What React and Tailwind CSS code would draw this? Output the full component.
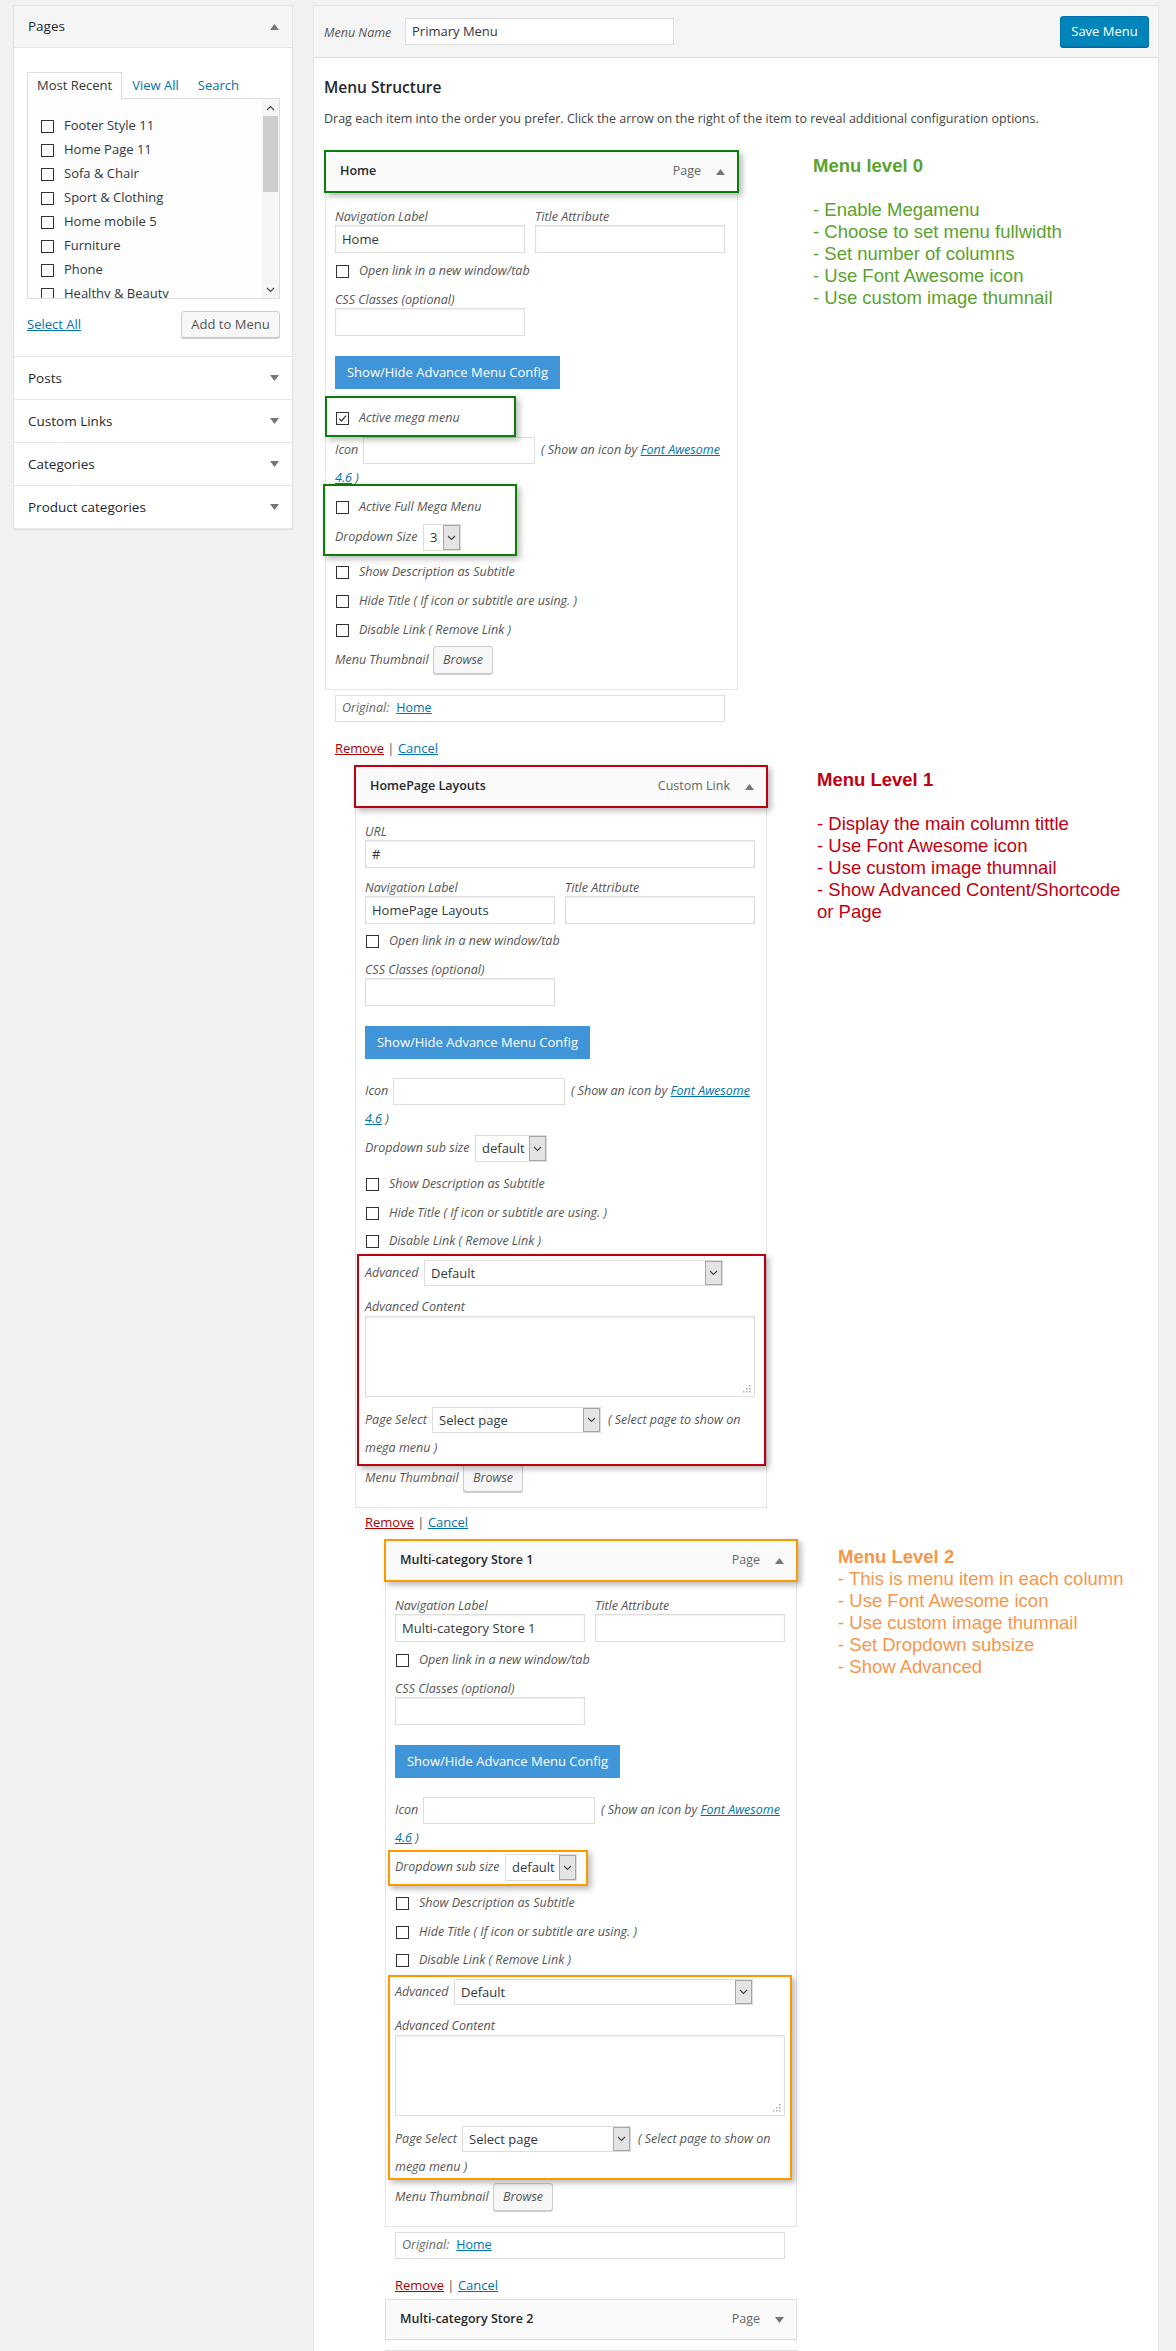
import React from "react";

function Tri({ up = true }) {
  return (
    <svg width="9" height="6" viewBox="0 0 9 6" className="shrink-0">
      <polygon points={up ? "0,6 4.5,0 9,6" : "0,0 4.5,6 9,0"} fill="#72777c" />
    </svg>
  );
}

function Chev({ up = false }) {
  return (
    <svg width="9" height="6" viewBox="0 0 9 6">
      <polyline
        points={up ? "1,5 4.5,1.5 8,5" : "1,1 4.5,4.5 8,1"}
        fill="none"
        stroke="#444"
        strokeWidth="1.1"
      />
    </svg>
  );
}

function Checkbox({ checked }) {
  return (
    <span className="inline-flex h-[13px] w-[13px] shrink-0 items-center justify-center border border-[#333] bg-white">
      {checked && (
        <svg width="9" height="9" viewBox="0 0 9 9">
          <path d="M1 4.6 L3.4 7 L8 1.6" fill="none" stroke="#333" strokeWidth="1.2" />
        </svg>
      )}
    </span>
  );
}

function CheckRow({ label, checked }) {
  return (
    <div className="flex h-[20px] items-center">
      <span className="ml-[1px] flex">
        <Checkbox checked={checked} />
      </span>
      <span className="ml-[10px] italic text-[#555]">{label}</span>
    </div>
  );
}

function Label({ children }) {
  return <div className="h-[16px] leading-[16px] italic text-[#555]">{children}</div>;
}

function Field({ value }) {
  return (
    <div className="h-[28px] w-[190px] border border-[#ddd] bg-white pl-[6px] text-[13px] leading-[26px] text-[#32373c] shadow-[inset_0_1px_2px_rgba(0,0,0,0.07)]">
      {value}
    </div>
  );
}

function SelectBox({ value, className }) {
  return (
    <div className={"flex h-[26px] shrink-0 items-stretch border border-[#ddd] bg-white " + className}>
      <span className="flex-1 pl-[6px] text-[13px] not-italic leading-[24px] text-[#32373c]">{value}</span>
      <span className="flex w-[17px] items-center justify-center border border-[#a6a6a6] bg-[#e4e4e4]">
        <Chev />
      </span>
    </div>
  );
}

function Hl({ className }) {
  return (
    <div
      className={
        "pointer-events-none absolute border-2 shadow-[3px_3px_6px_rgba(0,0,0,0.28)] " + className
      }
    />
  );
}

function ItemHeader({ title, type, up = true, children }) {
  return (
    <div className="relative flex h-[41px] items-center border border-[#dfdfdf] bg-[#fafafa] pl-[14px] pr-[12px] shadow-[0_1px_1px_rgba(0,0,0,0.04)]">
      <span className="text-[12.5px] font-semibold text-[#23282d]">{title}</span>
      <span className="ml-auto text-[12.5px] text-[#666]">{type}</span>
      <span className="ml-[15px] flex">
        <Tri up={up} />
      </span>
      {children}
    </div>
  );
}

function ConfigButton() {
  return (
    <div className="mt-[20px] flex h-[33px] w-[225px] items-center justify-center bg-[#3f95d8] text-[13px] text-white">
      Show/Hide Advance Menu Config
    </div>
  );
}

function IconPara({ className }) {
  return (
    <div className={"italic text-[#555] " + className}>
      <div className="flex h-[27px] items-center">
        <span className="w-[28px] shrink-0">Icon</span>
        <span className="h-[27px] w-[172px] shrink-0 border border-[#ddd] bg-white" />
        <span className="ml-[6px] whitespace-nowrap">( Show an icon by&nbsp;</span>
        <a className="whitespace-nowrap text-[#0073aa] underline">Font Awesome</a>
      </div>
      <div className="h-[27px] leading-[27px]">
        <a className="text-[#0073aa] underline">4.6</a>
        <span> )</span>
      </div>
    </div>
  );
}

function NavTitle({ value }) {
  return (
    <div className="flex gap-[10px]">
      <div>
        <Label>Navigation Label</Label>
        <Field value={value} />
      </div>
      <div>
        <Label>Title Attribute</Label>
        <Field />
      </div>
    </div>
  );
}

function CssField() {
  return (
    <div className="mt-[11px]">
      <Label>CSS Classes (optional)</Label>
      <Field />
    </div>
  );
}

function ThumbRow({ className }) {
  return (
    <div className={"flex h-[28px] items-center " + className}>
      <span className="w-[98px] shrink-0 italic text-[#555]">Menu Thumbnail</span>
      <span className="flex h-[28px] w-[60px] items-center justify-center rounded-[3px] border border-[#ccc] bg-[#f7f7f7] italic text-[#555] shadow-[0_1px_0_#ccc]">
        Browse
      </span>
    </div>
  );
}

function SubSizeRow({ className, children }) {
  return (
    <div className={"relative flex h-[27px] items-center " + className}>
      <span className="w-[110px] shrink-0 italic text-[#555]">Dropdown sub size</span>
      <SelectBox value="default" className="h-[27px] w-[72px]" />
      {children}
    </div>
  );
}

function ResizeDots() {
  return (
    <svg width="9" height="9" viewBox="0 0 9 9" className="absolute bottom-[3px] right-[3px]">
      <g fill="#aaa">
        <rect x="7" y="1" width="1.5" height="1.5" />
        <rect x="4" y="4" width="1.5" height="1.5" />
        <rect x="7" y="4" width="1.5" height="1.5" />
        <rect x="1" y="7" width="1.5" height="1.5" />
        <rect x="4" y="7" width="1.5" height="1.5" />
        <rect x="7" y="7" width="1.5" height="1.5" />
      </g>
    </svg>
  );
}

function AdvancedGroup({ hl }) {
  return (
    <div className="relative mt-[9px]">
      <div className="flex h-[26px] items-center">
        <span className="w-[59px] shrink-0 italic text-[#555]">Advanced</span>
        <SelectBox value="Default" className="w-[299px]" />
      </div>
      <div className="mt-[13px]">
        <Label>Advanced Content</Label>
      </div>
      <div className="relative mt-[1px] h-[81px] w-[390px] border border-[#ddd] bg-white shadow-[inset_0_1px_2px_rgba(0,0,0,0.07)]">
        <ResizeDots />
      </div>
      <div className="mt-[9px] italic text-[#555]">
        <div className="flex h-[28px] items-center">
          <span className="w-[67px] shrink-0">Page Select</span>
          <SelectBox value="Select page" className="w-[169px]" />
          <span className="ml-[7px] whitespace-nowrap">( Select page to show on</span>
        </div>
        <div className="h-[28px] leading-[28px]">mega menu )</div>
      </div>
      {hl}
    </div>
  );
}

function RemoveCancel({ className }) {
  return (
    <div className={"ml-[10px] h-[16px] text-[13px] leading-[16px] " + className}>
      <a className="text-[#a00] underline">Remove</a>
      <span className="text-[#555]"> | </span>
      <a className="text-[#0073aa] underline">Cancel</a>
    </div>
  );
}

function Original() {
  return (
    <div className="ml-[10px] mt-[5px] flex h-[27px] w-[390px] items-center border border-[#ddd] bg-white pl-[6px]">
      <span className="italic text-[#666]">Original:</span>
      <a className="ml-[7px] text-[#0073aa] underline">Home</a>
    </div>
  );
}

function Settings({ children }) {
  return (
    <div className="border-x border-b border-[#e5e5e5] bg-white pb-[15px] pl-[9px] pr-[12px] pt-[17px]">
      {children}
    </div>
  );
}

function Item0() {
  return (
    <div className="ml-[1px] w-[413px] shrink-0">
      <ItemHeader title="Home" type="Page">
        <Hl className="-inset-[2px] border-[#0b7d0b]" />
      </ItemHeader>
      <Settings>
        <NavTitle value="Home" />
        <div className="mt-[8px]">
          <CheckRow label="Open link in a new window/tab" />
        </div>
        <CssField />
        <ConfigButton />
        <div className="relative mt-[19px]">
          <CheckRow checked label="Active mega menu" />
          <Hl className="-left-[10px] -top-[12px] h-[41px] w-[191px] border-[#0b7d0b]" />
        </div>
        <IconPara className="mt-[9px]" />
        <div className="relative mt-[6px]">
          <CheckRow label="Active Full Mega Menu" />
          <div className="mt-[7px] flex h-[27px] items-center">
            <span className="w-[88px] shrink-0 italic text-[#555]">Dropdown Size</span>
            <SelectBox value="3" className="h-[27px] w-[38px]" />
          </div>
          <Hl className="-left-[12px] -top-[13px] h-[72px] w-[194px] border-[#0b7d0b]" />
        </div>
        <div className="mt-[11px]">
          <CheckRow label="Show Description as Subtitle" />
        </div>
        <div className="mt-[9px]">
          <CheckRow label="Hide Title ( If icon or subtitle are using. )" />
        </div>
        <div className="mt-[9px]">
          <CheckRow label="Disable Link ( Remove Link )" />
        </div>
        <ThumbRow className="mt-[6px]" />
      </Settings>
      <Original />
      <RemoveCancel className="mt-[18px]" />
    </div>
  );
}

function Item1() {
  return (
    <div className="ml-[31px] w-[412px] shrink-0">
      <ItemHeader title="HomePage Layouts" type="Custom Link">
        <Hl className="-inset-[2px] border-[#c00010]" />
      </ItemHeader>
      <Settings>
        <Label>URL</Label>
        <div className="h-[28px] w-[390px] border border-[#ddd] bg-white pl-[6px] text-[13px] leading-[26px] text-[#32373c] shadow-[inset_0_1px_2px_rgba(0,0,0,0.07)]">
          #
        </div>
        <div className="mt-[12px]">
          <NavTitle value="HomePage Layouts" />
        </div>
        <div className="mt-[7px]">
          <CheckRow label="Open link in a new window/tab" />
        </div>
        <CssField />
        <ConfigButton />
        <IconPara className="mt-[19px]" />
        <SubSizeRow className="mt-[3px]" />
        <div className="mt-[12px]">
          <CheckRow label="Show Description as Subtitle" />
        </div>
        <div className="mt-[9px]">
          <CheckRow label="Hide Title ( If icon or subtitle are using. )" />
        </div>
        <div className="mt-[8px]">
          <CheckRow label="Disable Link ( Remove Link )" />
        </div>
        <AdvancedGroup hl={<Hl className="-left-[8px] -top-[6px] h-[212px] w-[409px] border-[#c00010]" />} />
        <ThumbRow className="mt-[2px]" />
      </Settings>
      <RemoveCancel className="mt-[6px]" />
    </div>
  );
}

function Item2() {
  return (
    <div className="ml-[61px] w-[412px] shrink-0">
      <ItemHeader title="Multi-category Store 1" type="Page">
        <Hl className="-inset-[2px] border-[#ff9900]" />
      </ItemHeader>
      <Settings>
        <NavTitle value="Multi-category Store 1" />
        <div className="mt-[8px]">
          <CheckRow label="Open link in a new window/tab" />
        </div>
        <CssField />
        <ConfigButton />
        <IconPara className="mt-[19px]" />
        <SubSizeRow className="mt-[3px]">
          <Hl className="-left-[7px] -top-[4px] h-[36px] w-[200px] border-[#ff9900]" />
        </SubSizeRow>
        <div className="mt-[12px]">
          <CheckRow label="Show Description as Subtitle" />
        </div>
        <div className="mt-[9px]">
          <CheckRow label="Hide Title ( If icon or subtitle are using. )" />
        </div>
        <div className="mt-[8px]">
          <CheckRow label="Disable Link ( Remove Link )" />
        </div>
        <AdvancedGroup hl={<Hl className="-left-[7px] -top-[4px] h-[205px] w-[404px] border-[#ff9900]" />} />
        <ThumbRow className="mt-[2px]" />
      </Settings>
      <Original />
      <RemoveCancel className="mt-[18px]" />
      <div className="mt-[6px]">
        <ItemHeader title="Multi-category Store 2" type="Page" up={false} />
      </div>
      <div className="mt-[10px] h-[41px] border border-[#dfdfdf] bg-[#fafafa]" />
    </div>
  );
}

const pages = [
  "Footer Style 11",
  "Home Page 11",
  "Sofa & Chair",
  "Sport & Clothing",
  "Home mobile 5",
  "Furniture",
  "Phone",
  "Healthy & Beauty",
];

function LeftPanel() {
  return (
    <div className="w-[280px] shrink-0 border border-[#e5e5e5] bg-white shadow-[0_1px_1px_rgba(0,0,0,0.06)]">
      <div className="flex h-[42px] items-center border-b border-[#e5e5e5] bg-[#f5f5f5] pl-[14px] pr-[13px]">
        <span className="text-[13.5px] text-[#23282d]">Pages</span>
        <span className="ml-auto flex">
          <Tri up />
        </span>
      </div>
      <div className="border-b border-[#e5e5e5] pb-[18px] pl-[13px] pr-[12px] pt-[24px]">
        <div className="flex h-[26px] items-end text-[13px]">
          <div className="relative z-10 -mb-px flex h-[27px] items-center border-x border-t border-[#ddd] bg-[#fdfdfd] px-[9px] text-[#32373c]">
            Most Recent
          </div>
          <span className="-mb-px ml-[10px] flex h-[27px] items-center text-[#0073aa]">View All</span>
          <span className="-mb-px ml-[19px] flex h-[27px] items-center text-[#0073aa]">Search</span>
        </div>
        <div className="relative h-[201px] w-[253px] overflow-hidden border border-[#ddd] bg-[#fdfdfd] pt-[15px]">
          {pages.map((p) => (
            <div key={p} className="flex h-[24px] items-center pl-[13px]">
              <Checkbox />
              <span className="ml-[10px] text-[13px] text-[#32373c]">{p}</span>
            </div>
          ))}
          <div className="absolute bottom-0 right-0 top-0 w-[17px] bg-[#f6f6f6]">
            <div className="flex h-[17px] items-center justify-center">
              <Chev up />
            </div>
            <div className="ml-[1px] h-[76px] w-[15px] bg-[#cdcdcd]" />
            <div className="absolute bottom-0 left-0 flex h-[17px] w-[17px] items-center justify-center">
              <Chev />
            </div>
          </div>
        </div>
        <div className="mt-[12px] flex h-[27px] items-center justify-between">
          <a className="text-[13px] text-[#0073aa] underline">Select All</a>
          <span className="flex h-[27px] w-[99px] items-center justify-center rounded-[3px] border border-[#ccc] bg-[#f7f7f7] text-[13px] text-[#555] shadow-[0_1px_0_#ccc]">
            Add to Menu
          </span>
        </div>
      </div>
      {["Posts", "Custom Links", "Categories", "Product categories"].map((t, i) => (
        <div
          key={t}
          className={
            i < 3
              ? "flex h-[43px] items-center border-b border-[#e5e5e5] pl-[14px] pr-[13px]"
              : "flex h-[42px] items-center pl-[14px] pr-[13px]"
          }
        >
          <span className="text-[13.5px] text-[#23282d]">{t}</span>
          <span className="ml-auto flex">
            <Tri up={false} />
          </span>
        </div>
      ))}
    </div>
  );
}

function RightPanel() {
  return (
    <div className="min-h-[2400px] w-[846px] shrink-0 border border-[#e5e5e5] bg-white">
      <div className="flex h-[52px] items-center border-b border-[#dfdfdf] bg-[#f5f5f5] pl-[10px] pr-[9px]">
        <span className="mt-[4px] w-[81px] shrink-0 italic text-[#555]">Menu Name</span>
        <div className="h-[27px] w-[269px] border border-[#ddd] bg-white pl-[6px] text-[13px] leading-[25px] text-[#32373c]">
          Primary Menu
        </div>
        <div className="ml-auto flex h-[31px] w-[89px] items-center justify-center rounded-[3px] border border-[#0073aa] bg-[#0085ba] text-[13px] text-white shadow-[0_1px_0_#006799]">
          Save Menu
        </div>
      </div>
      <div className="pl-[10px]">
        <h3 className="mt-[19px] h-[20px] text-[15.5px] font-semibold leading-[20px] text-[#23282d]">
          Menu Structure
        </h3>
        <p className="mt-[13px] h-[18px] text-[12.5px] leading-[18px] text-[#444]">
          Drag each item into the order you prefer. Click the arrow on the right of the item to reveal additional
          configuration options.
        </p>
        <div className="mt-[23px] flex items-start">
          <Item0 />
          <div className="ml-[75px] mt-[4px] font-['Liberation_Sans',Arial,sans-serif] text-[18.5px] leading-[22px] text-[#5ba22e]">
            <div className="font-bold">Menu level 0</div>
            <div className="h-[22px]" />
            <div>- Enable Megamenu</div>
            <div>- Choose to set menu fullwidth</div>
            <div>- Set number of columns</div>
            <div>- Use Font Awesome icon</div>
            <div>- Use custom image thumnail</div>
          </div>
        </div>
        <div className="mt-[10px] flex items-start">
          <Item1 />
          <div className="ml-[50px] mt-[3px] font-['Liberation_Sans',Arial,sans-serif] text-[18.5px] leading-[22px] text-[#c20010]">
            <div className="font-bold">Menu Level 1</div>
            <div className="h-[22px]" />
            <div>- Display the main column tittle</div>
            <div>- Use Font Awesome icon</div>
            <div>- Use custom image thumnail</div>
            <div className="whitespace-nowrap">- Show Advanced Content/Shortcode</div>
            <div>or Page</div>
          </div>
        </div>
        <div className="mt-[10px] flex items-start">
          <Item2 />
          <div className="ml-[41px] mt-[6px] font-['Liberation_Sans',Arial,sans-serif] text-[18.5px] leading-[22px] text-[#f7964b]">
            <div className="font-bold">Menu Level 2</div>
            <div>- This is menu item in each column</div>
            <div>- Use Font Awesome icon</div>
            <div>- Use custom image thumnail</div>
            <div>- Set Dropdown subsize</div>
            <div>- Show Advanced</div>
          </div>
        </div>
      </div>
    </div>
  );
}

export default function App() {
  return (
    <div className="h-[2351px] overflow-hidden bg-[#f1f1f1] font-['Open_Sans',sans-serif] text-[12.5px] text-[#444]">
      <div className="flex items-start gap-[20px] pl-[13px] pt-[5px]">
        <LeftPanel />
        <RightPanel />
      </div>
    </div>
  );
}
